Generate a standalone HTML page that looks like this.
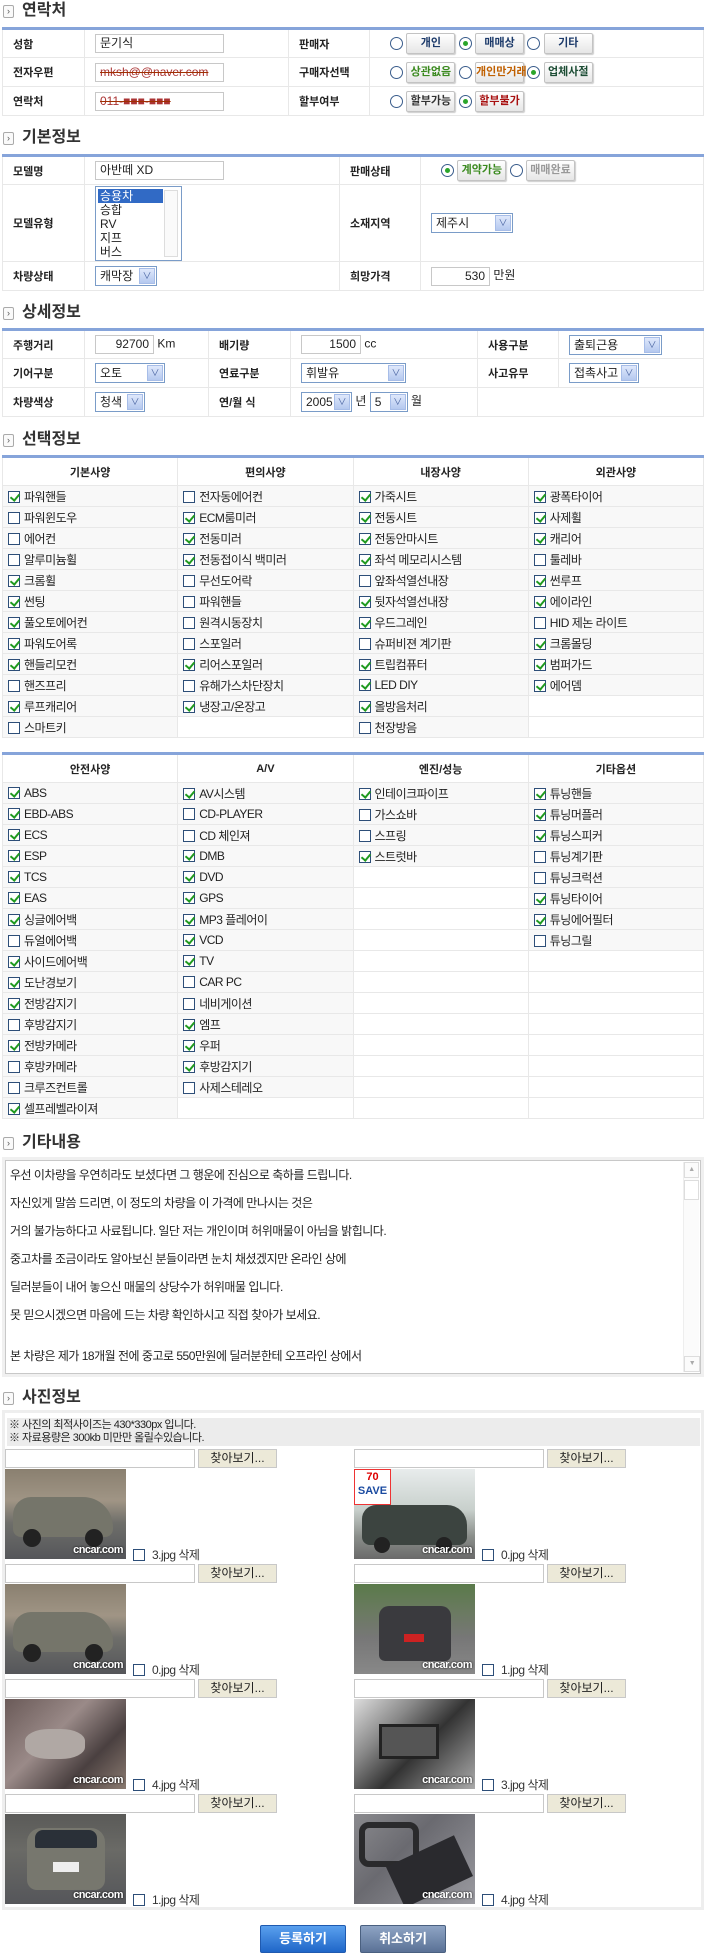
<!DOCTYPE html>
<html><head><meta charset="utf-8">
<style>
*{box-sizing:border-box;margin:0;padding:0}
body{width:706px;height:1957px;position:relative;background:#fff;font-family:"Liberation Sans","Noto Sans CJK KR","NanumGothic",sans-serif;font-size:12px;color:#222;overflow:hidden}
.ttl{position:absolute;left:22px;font-weight:bold;font-size:16px;line-height:20px;color:#333}
.ico{position:absolute;left:-19px;top:4px;width:11px;height:13px;border:1px solid #aaa;border-radius:2px;font-size:9px;line-height:11px;text-align:center;color:#555;font-weight:normal;background:#fafafa}
table.f{position:absolute;left:2px;width:702px;border-collapse:collapse;border-top:3px solid #86a4da}
table.f td{border:1px solid #e8e8e8;padding:0 0 0 10px;vertical-align:middle;white-space:nowrap}
table.f td.l{font-weight:bold;font-size:11px}
.in{display:inline-block;height:19px;border:1px solid #c8c8c8;background:#fff;vertical-align:middle;font-size:12px;line-height:17px;padding:0 4px}
.sel{display:inline-block;height:20px;border:1px solid #7a9cc8;background:#fff;vertical-align:middle;font-size:12px;line-height:18px;padding:0 0 0 4px;position:relative}
.sel i{position:absolute;right:1px;top:1px;width:16px;height:16px;background:linear-gradient(#dfe8fb,#b4c8ef);border:1px solid #a7bde8;font-style:normal;font-size:9px;line-height:14px;text-align:center;color:#4a64a0}
.rd{display:inline-block;width:13px;height:13px;border:1px solid #3a5d8c;border-radius:50%;vertical-align:middle;position:relative;background:#fff}
.rd.on:after{content:"";position:absolute;left:3px;top:3px;width:5px;height:5px;border-radius:50%;background:#2aa52a}
.bt{display:inline-block;width:49px;height:21px;border:1px solid #c3c3c3;border-radius:2px;background:linear-gradient(#fff,#e6e6e6);box-shadow:1px 1px 1px #ccc;font-weight:bold;font-size:11px;line-height:19px;text-align:center;vertical-align:middle}
.opt{position:absolute;left:2px;width:702px;border-collapse:collapse;border-top:3px solid #86a4da;table-layout:fixed}
.opt th{height:29px;border:1px solid #e8e8e8;font-size:11px;font-weight:bold;background:#fff}
.opt td{height:21px;border:1px solid #e8e8e8;background:#f8f8f8;padding-left:5px;font-size:12px;white-space:nowrap;letter-spacing:-0.5px}
.opt td.e{background:#fff}
.cb{display:inline-block;width:12px;height:12px;border:1px solid #2d4e78;background:#fff;vertical-align:-2px;margin-right:4px;position:relative}
.cb.on:after{content:"";position:absolute;left:3px;top:0px;width:4px;height:7px;border:solid #1f9a1f;border-width:0 2px 2px 0;transform:rotate(40deg)}
.pi{position:absolute;height:19px;width:190px;border:1px solid #c8c8c8;background:#fff}
.pb{position:absolute;height:19px;width:79px;border:1px solid #c8c8c8;background:#ece9d8;text-align:center;font-size:12px;line-height:17px}
.ph{position:absolute;width:121px;height:90px;overflow:hidden}
.ph .wm{position:absolute;right:3px;bottom:3px;color:#fff;font-size:11px;font-weight:bold;text-shadow:0 0 2px #000;letter-spacing:-0.5px}
.pt{position:absolute;font-size:12px;color:#333;letter-spacing:-0.5px}
</style></head><body>

<!-- 연락처 -->
<div class="ttl" style="top:1px"><span class="ico">›</span>연락처</div>
<table class="f" style="top:27px">
<tr style="height:29px"><td class="l" style="width:82px">성함</td><td style="width:204px"><span class="in" style="width:129px">문기식</span></td><td class="l" style="width:81px">판매자</td><td style="padding-left:20px"><span class="rd"></span> <span class="bt" style="color:#1c3a6a">개인</span> <span class="rd on"></span> <span class="bt" style="color:#1c3a6a">매매상</span> <span class="rd"></span> <span class="bt" style="color:#1c3a6a">기타</span></td></tr>
<tr style="height:29px"><td class="l">전자우편</td><td><span class="in" style="width:129px;color:#a33;text-decoration:line-through;text-decoration-color:#a03000">mksh@@naver.com</span></td><td class="l">구매자선택</td><td style="padding-left:20px"><span class="rd"></span> <span class="bt" style="color:#3b8a1f">상관없음</span> <span class="rd"></span> <span class="bt" style="color:#c06000">개인만거래</span> <span class="rd on"></span> <span class="bt" style="color:#1e4e36">업체사절</span></td></tr>
<tr style="height:29px"><td class="l">연락처</td><td><span class="in" style="width:129px;color:#a33;text-decoration:line-through;text-decoration-color:#a03000">011-■■■-■■■</span></td><td class="l">할부여부</td><td style="padding-left:20px"><span class="rd"></span> <span class="bt" style="color:#333">할부가능</span> <span class="rd on"></span> <span class="bt" style="color:#a81010">할부불가</span></td></tr>
</table>

<!-- 기본정보 -->
<div class="ttl" style="top:128px"><span class="ico">›</span>기본정보</div>
<table class="f" style="top:154px">
<tr style="height:29px"><td class="l" style="width:82px">모델명</td><td style="width:255px"><span class="in" style="width:129px">아반떼 XD</span></td><td class="l" style="width:81px">판매상태</td><td style="padding-left:20px"><span class="rd on"></span> <span class="bt" style="color:#3b8a1f">계약가능</span> <span class="rd"></span> <span class="bt" style="color:#999">매매완료</span></td></tr>
<tr style="height:77px"><td class="l">모델유형</td><td><div style="width:87px;height:75px;border:1px solid #7a9cc8;padding:2px;position:relative;font-size:12px;line-height:14px">
<div style="background:#316ac5;color:#fff;width:65px;padding-left:2px">승용차</div><div style="padding-left:2px">승합</div><div style="padding-left:2px">RV</div><div style="padding-left:2px">지프</div><div style="padding-left:2px">버스</div>
<div style="position:absolute;right:3px;top:3px;width:14px;height:67px;border:1px solid #ddd;background:#fafafa"></div></div></td><td class="l">소재지역</td><td><span class="sel" style="width:82px">제주시<i>∨</i></span></td></tr>
<tr style="height:29px"><td class="l">차량상태</td><td><span class="sel" style="width:62px">캐막장<i>∨</i></span></td><td class="l">희망가격</td><td><span class="in" style="width:59px;text-align:right">530</span> 만원</td></tr>
</table>

<!-- 상세정보 -->
<div class="ttl" style="top:303px"><span class="ico">›</span>상세정보</div>
<table class="f" style="top:328px">
<tr style="height:29px"><td class="l" style="width:82px">주행거리</td><td style="width:124px"><span class="in" style="width:59px;text-align:right">92700</span> Km</td><td class="l" style="width:82px">배기량</td><td style="width:187px"><span class="in" style="width:60px;text-align:right">1500</span> cc</td><td class="l" style="width:81px">사용구분</td><td><span class="sel" style="width:93px">출퇴근용<i>∨</i></span></td></tr>
<tr style="height:29px"><td class="l">기어구분</td><td><span class="sel" style="width:70px">오토<i>∨</i></span></td><td class="l">연료구분</td><td><span class="sel" style="width:105px">휘발유<i>∨</i></span></td><td class="l">사고유무</td><td><span class="sel" style="width:70px">접촉사고<i>∨</i></span></td></tr>
<tr style="height:29px"><td class="l">차량색상</td><td><span class="sel" style="width:50px">청색<i>∨</i></span></td><td class="l">연/월 식</td><td colspan="1"><span class="sel" style="width:51px">2005<i>∨</i></span> 년 <span class="sel" style="width:38px">5<i>∨</i></span> 월</td><td colspan="2"></td></tr>
</table>

<!-- 선택정보 -->
<div class="ttl" style="top:430px"><span class="ico">›</span>선택정보</div>
<table class="opt" style="top:455px">
<tr><th>기본사양</th><th>편의사양</th><th>내장사양</th><th>외관사양</th></tr>
<tr><td><span class="cb on"></span>파워핸들</td><td><span class="cb"></span>전자동에어컨</td><td><span class="cb on"></span>가죽시트</td><td><span class="cb on"></span>광폭타이어</td></tr>
<tr><td><span class="cb"></span>파워윈도우</td><td><span class="cb on"></span>ECM룸미러</td><td><span class="cb on"></span>전동시트</td><td><span class="cb on"></span>사제휠</td></tr>
<tr><td><span class="cb"></span>에어컨</td><td><span class="cb on"></span>전동미러</td><td><span class="cb on"></span>전동안마시트</td><td><span class="cb on"></span>캐리어</td></tr>
<tr><td><span class="cb"></span>알루미늄휠</td><td><span class="cb on"></span>전동접이식 백미러</td><td><span class="cb on"></span>좌석 메모리시스템</td><td><span class="cb"></span>툴레바</td></tr>
<tr><td><span class="cb on"></span>크롬휠</td><td><span class="cb"></span>무선도어락</td><td><span class="cb"></span>앞좌석열선내장</td><td><span class="cb on"></span>썬루프</td></tr>
<tr><td><span class="cb on"></span>썬팅</td><td><span class="cb"></span>파워핸들</td><td><span class="cb on"></span>뒷자석열선내장</td><td><span class="cb on"></span>에이라인</td></tr>
<tr><td><span class="cb on"></span>풀오토에어컨</td><td><span class="cb"></span>원격시동장치</td><td><span class="cb on"></span>우드그레인</td><td><span class="cb"></span>HID 제논 라이트</td></tr>
<tr><td><span class="cb on"></span>파워도어록</td><td><span class="cb"></span>스포일러</td><td><span class="cb"></span>슈퍼비젼 계기판</td><td><span class="cb on"></span>크롬몰딩</td></tr>
<tr><td><span class="cb on"></span>핸들리모컨</td><td><span class="cb on"></span>리어스포일러</td><td><span class="cb on"></span>트립컴퓨터</td><td><span class="cb on"></span>범퍼가드</td></tr>
<tr><td><span class="cb"></span>핸즈프리</td><td><span class="cb"></span>유해가스차단장치</td><td><span class="cb on"></span>LED DIY</td><td><span class="cb on"></span>에어뎀</td></tr>
<tr><td><span class="cb on"></span>루프캐리어</td><td><span class="cb on"></span>냉장고/온장고</td><td><span class="cb on"></span>올방음처리</td><td class="e"></td></tr>
<tr><td><span class="cb"></span>스마트키</td><td class="e"></td><td><span class="cb"></span>천장방음</td><td class="e"></td></tr>
</table>

<table class="opt" style="top:752px">
<tr><th>안전사양</th><th>A/V</th><th>엔진/성능</th><th>기타옵션</th></tr>
<tr><td><span class="cb on"></span>ABS</td><td><span class="cb on"></span>AV시스템</td><td><span class="cb on"></span>인테이크파이프</td><td><span class="cb on"></span>튜닝핸들</td></tr>
<tr><td><span class="cb on"></span>EBD-ABS</td><td><span class="cb"></span>CD-PLAYER</td><td><span class="cb"></span>가스쇼바</td><td><span class="cb on"></span>튜닝머플러</td></tr>
<tr><td><span class="cb on"></span>ECS</td><td><span class="cb"></span>CD 체인져</td><td><span class="cb"></span>스프링</td><td><span class="cb on"></span>튜닝스피커</td></tr>
<tr><td><span class="cb on"></span>ESP</td><td><span class="cb on"></span>DMB</td><td><span class="cb on"></span>스트럿바</td><td><span class="cb"></span>튜닝계기판</td></tr>
<tr><td><span class="cb on"></span>TCS</td><td><span class="cb on"></span>DVD</td><td class="e"></td><td><span class="cb"></span>튜닝크럭션</td></tr>
<tr><td><span class="cb on"></span>EAS</td><td><span class="cb on"></span>GPS</td><td class="e"></td><td><span class="cb on"></span>튜닝타이어</td></tr>
<tr><td><span class="cb on"></span>싱글에어백</td><td><span class="cb on"></span>MP3 플레어이</td><td class="e"></td><td><span class="cb on"></span>튜닝에어필터</td></tr>
<tr><td><span class="cb"></span>듀얼에어백</td><td><span class="cb on"></span>VCD</td><td class="e"></td><td><span class="cb"></span>튜닝그릴</td></tr>
<tr><td><span class="cb on"></span>사이드에어백</td><td><span class="cb on"></span>TV</td><td class="e"></td><td class="e"></td></tr>
<tr><td><span class="cb on"></span>도난경보기</td><td><span class="cb"></span>CAR PC</td><td class="e"></td><td class="e"></td></tr>
<tr><td><span class="cb on"></span>전방감지기</td><td><span class="cb"></span>네비게이션</td><td class="e"></td><td class="e"></td></tr>
<tr><td><span class="cb"></span>후방감지기</td><td><span class="cb on"></span>엠프</td><td class="e"></td><td class="e"></td></tr>
<tr><td><span class="cb on"></span>전방카메라</td><td><span class="cb on"></span>우퍼</td><td class="e"></td><td class="e"></td></tr>
<tr><td><span class="cb"></span>후방카메라</td><td><span class="cb on"></span>후방감지기</td><td class="e"></td><td class="e"></td></tr>
<tr><td><span class="cb"></span>크루즈컨트롤</td><td><span class="cb"></span>사제스테레오</td><td class="e"></td><td class="e"></td></tr>
<tr><td><span class="cb on"></span>셀프레벨라이져</td><td class="e"></td><td class="e"></td><td class="e"></td></tr>
</table>

<!-- 기타내용 -->
<div class="ttl" style="top:1133px"><span class="ico">›</span>기타내용</div>
<div style="position:absolute;left:2px;top:1157px;width:702px;height:220px;background:#f0f0f0;padding:3px">
<div style="position:relative;width:696px;height:214px;border:1px solid #c8c8c8;background:#fff;font-size:12px;letter-spacing:-0.5px;color:#222">
<div style="position:absolute;left:4px;top:5px">우선 이차량을 우연히라도 보셨다면 그 행운에 진심으로 축하를 드립니다.</div>
<div style="position:absolute;left:4px;top:33px">자신있게 말씀 드리면, 이 정도의 차량을 이 가격에 만나시는 것은</div>
<div style="position:absolute;left:4px;top:61px">거의 불가능하다고 사료됩니다. 일단 저는 개인이며 허위매물이 아님을 밝힙니다.</div>
<div style="position:absolute;left:4px;top:89px">중고차를 조금이라도 알아보신 분들이라면 눈치 채셨겠지만 온라인 상에</div>
<div style="position:absolute;left:4px;top:117px">딜러분들이 내어 놓으신 매물의 상당수가 허위매물 입니다.</div>
<div style="position:absolute;left:4px;top:145px">못 믿으시겠으면 마음에 드는 차량 확인하시고 직접 찾아가 보세요.</div>
<div style="position:absolute;left:4px;top:186px">본 차량은 제가 18개월 전에 중고로 550만원에 딜러분한테 오프라인 상에서</div>
<div style="position:absolute;right:1px;top:1px;width:16px;height:210px;background:#fbfbfb;border-left:1px solid #eee">
<div style="height:16px;border:1px solid #ddd;font-size:7px;color:#aaa;text-align:center;line-height:14px">▲</div>
<div style="height:20px;margin-top:2px;border:1px solid #ddd;background:#fff"></div>
<div style="position:absolute;bottom:0;width:16px;height:16px;border:1px solid #ddd;font-size:7px;color:#aaa;text-align:center;line-height:14px">▼</div></div>
</div></div>

<!-- 사진정보 -->
<div class="ttl" style="top:1388px"><span class="ico">›</span>사진정보</div>
<div style="position:absolute;left:2px;top:1410px;width:702px;height:500px;border:3px solid #eee;background:#fff"></div>
<div style="position:absolute;left:7px;top:1418px;width:693px;height:28px;background:#ececec;font-size:11px;line-height:13px;padding:1px 2px;letter-spacing:-0.5px">※ 사진의 최적사이즈는 430*330px 입니다.<br>※ 자료용량은 300kb 미만만 올릴수있습니다.</div>

<!-- row 1 -->
<div class="pi" style="left:5px;top:1449px"></div><div class="pb" style="left:198px;top:1449px">찾아보기...</div>
<div class="ph" style="left:5px;top:1469px;background:linear-gradient(180deg,#8a8070 0%,#a09585 35%,#6e6e6a 60%,#55565a 100%)"><div style="position:absolute;left:8px;top:28px;width:100px;height:40px;background:#75756a;border-radius:18px 30px 8px 8px"></div><div style="position:absolute;left:18px;top:60px;width:18px;height:18px;border-radius:50%;background:#222"></div><div style="position:absolute;left:80px;top:60px;width:18px;height:18px;border-radius:50%;background:#222"></div><span class="wm">cncar.com</span></div>
<span class="cb" style="position:absolute;left:133px;top:1549px"></span><span class="pt" style="left:152px;top:1546px">3.jpg 삭제</span>
<div class="pi" style="left:354px;top:1449px"></div><div class="pb" style="left:547px;top:1449px">찾아보기...</div>
<div class="ph" style="left:354px;top:1469px;background:linear-gradient(180deg,#e8ecec 0%,#c8d0cc 45%,#8a8e8a 75%,#6a6a6a 100%)"><div style="position:absolute;left:0;top:0;width:37px;height:36px;background:#fff;border:1px solid #e33;color:#d00;font-weight:bold;font-size:11px;text-align:center;line-height:14px">70<br><span style="color:#1a4aa0">SAVE</span></div><div style="position:absolute;left:8px;top:36px;width:105px;height:40px;background:#3c4440;border-radius:14px 20px 8px 8px"></div><div style="position:absolute;left:20px;top:68px;width:16px;height:16px;border-radius:50%;background:#222"></div><div style="position:absolute;left:82px;top:68px;width:16px;height:16px;border-radius:50%;background:#222"></div><span class="wm">cncar.com</span></div>
<span class="cb" style="position:absolute;left:482px;top:1549px"></span><span class="pt" style="left:501px;top:1546px">0.jpg 삭제</span>

<!-- row 2 -->
<div class="pi" style="left:5px;top:1564px"></div><div class="pb" style="left:198px;top:1564px">찾아보기...</div>
<div class="ph" style="left:5px;top:1584px;background:linear-gradient(180deg,#8a8070 0%,#a09585 35%,#6e6e6a 60%,#55565a 100%)"><div style="position:absolute;left:8px;top:28px;width:100px;height:40px;background:#75756a;border-radius:18px 30px 8px 8px"></div><div style="position:absolute;left:18px;top:60px;width:18px;height:18px;border-radius:50%;background:#222"></div><div style="position:absolute;left:80px;top:60px;width:18px;height:18px;border-radius:50%;background:#222"></div><span class="wm">cncar.com</span></div>
<span class="cb" style="position:absolute;left:133px;top:1664px"></span><span class="pt" style="left:152px;top:1661px">0.jpg 삭제</span>
<div class="pi" style="left:354px;top:1564px"></div><div class="pb" style="left:547px;top:1564px">찾아보기...</div>
<div class="ph" style="left:354px;top:1584px;background:linear-gradient(180deg,#5a7a4a 0%,#6a7a60 30%,#777 60%,#888 100%)"><div style="position:absolute;left:25px;top:22px;width:72px;height:55px;background:#3a3a3e;border-radius:10px 10px 6px 6px"></div><div style="position:absolute;left:50px;top:50px;width:20px;height:8px;background:#c22"></div><span class="wm">cncar.com</span></div>
<span class="cb" style="position:absolute;left:482px;top:1664px"></span><span class="pt" style="left:501px;top:1661px">1.jpg 삭제</span>

<!-- row 3 -->
<div class="pi" style="left:5px;top:1679px"></div><div class="pb" style="left:198px;top:1679px">찾아보기...</div>
<div class="ph" style="left:5px;top:1699px;background:linear-gradient(135deg,#6a5a58 0%,#9a8a88 40%,#4a4040 70%,#8a7a70 100%)"><div style="position:absolute;left:20px;top:30px;width:60px;height:30px;background:#b0a8a4;border-radius:40%"></div><span class="wm">cncar.com</span></div>
<span class="cb" style="position:absolute;left:133px;top:1779px"></span><span class="pt" style="left:152px;top:1776px">4.jpg 삭제</span>
<div class="pi" style="left:354px;top:1679px"></div><div class="pb" style="left:547px;top:1679px">찾아보기...</div>
<div class="ph" style="left:354px;top:1699px;background:linear-gradient(135deg,#ddd 0%,#888 30%,#333 55%,#777 80%,#aaa 100%)"><div style="position:absolute;left:25px;top:25px;width:60px;height:35px;background:#555;border:3px solid #222"></div><span class="wm">cncar.com</span></div>
<span class="cb" style="position:absolute;left:482px;top:1779px"></span><span class="pt" style="left:501px;top:1776px">3.jpg 삭제</span>

<!-- row 4 -->
<div class="pi" style="left:5px;top:1794px"></div><div class="pb" style="left:198px;top:1794px">찾아보기...</div>
<div class="ph" style="left:5px;top:1814px;background:linear-gradient(180deg,#5a5a58 0%,#6a6a66 40%,#55565a 100%)"><div style="position:absolute;left:22px;top:14px;width:78px;height:62px;background:#77776e;border-radius:14px 14px 10px 10px"></div><div style="position:absolute;left:30px;top:16px;width:62px;height:18px;background:#2a3038;border-radius:8px 8px 2px 2px"></div><div style="position:absolute;left:48px;top:48px;width:26px;height:10px;background:#eee"></div><span class="wm">cncar.com</span></div>
<span class="cb" style="position:absolute;left:133px;top:1894px"></span><span class="pt" style="left:152px;top:1891px">1.jpg 삭제</span>
<div class="pi" style="left:354px;top:1794px"></div><div class="pb" style="left:547px;top:1794px">찾아보기...</div>
<div class="ph" style="left:354px;top:1814px;background:linear-gradient(135deg,#8a8a8e 0%,#6a6a70 40%,#9a9aa0 100%)"><div style="position:absolute;left:5px;top:8px;width:60px;height:45px;border:6px solid #2a2a2c;border-radius:10px"></div><div style="position:absolute;left:38px;top:35px;width:75px;height:45px;background:#2a2a2e;transform:rotate(-25deg)"></div><span class="wm">cncar.com</span></div>
<span class="cb" style="position:absolute;left:482px;top:1894px"></span><span class="pt" style="left:501px;top:1891px">4.jpg 삭제</span>

<!-- buttons -->
<div style="position:absolute;left:260px;top:1925px;width:86px;height:28px;border:1px solid #1f5ab0;border-radius:2px;background:linear-gradient(#5aa0ee,#1f66c8);color:#fff;font-weight:bold;font-size:13px;text-align:center;line-height:26px">등록하기</div>
<div style="position:absolute;left:360px;top:1925px;width:86px;height:28px;border:1px solid #4a6080;border-radius:2px;background:linear-gradient(#8ea4c4,#5a7196);color:#fff;font-weight:bold;font-size:13px;text-align:center;line-height:26px">취소하기</div>

</body></html>
